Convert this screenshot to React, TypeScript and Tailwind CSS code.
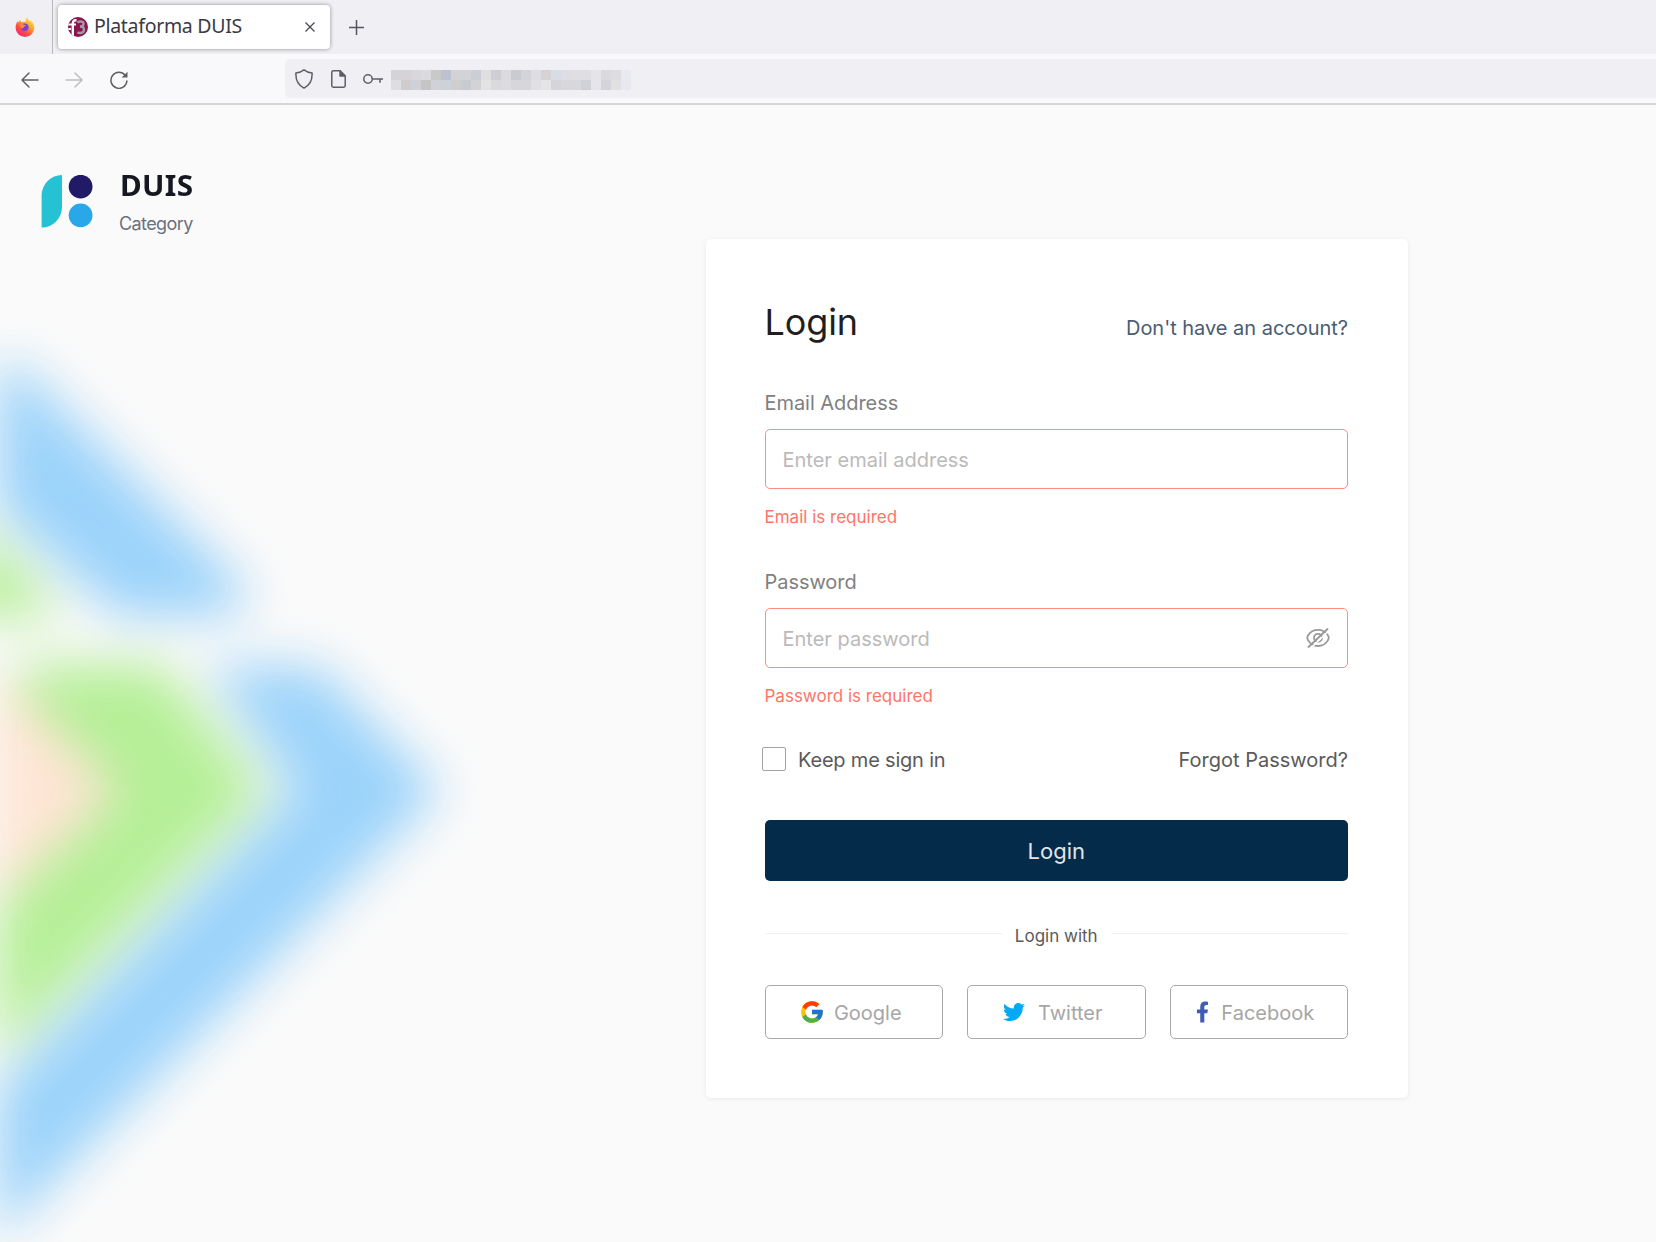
import React from "react";
import { FcGoogle } from "react-icons/fc";
import { FaTwitter, FaFacebookF } from "react-icons/fa";

const MOSAIC = [
  ["#d3d3d8", "#d5d3d6", "#d8d8dc", "#dbdbdd", "#c9c9ca", "#bec1cf", "#d3d3d7", "#d3d3d7", "#cdcdd5", "#dfdfe2", "#cfcfd3", "#dadadf", "#cacbd0", "#d3d3d8", "#dddde3", "#d6d3d5", "#d8dce6", "#dddde3", "#dfdfe3", "#dedee3", "#e4e4e9", "#dadade", "#dddddf", "#e9e9f0"],
  ["#dedee2", "#cfcccf", "#d0d1d7", "#c5c5c6", "#d1d2d7", "#cdd1d8", "#cecece", "#cacbd0", "#d3d3d7", "#e3e3e6", "#dadadc", "#dbdbe0", "#d6d6db", "#d6d6db", "#dfdfe4", "#e5e5e7", "#d4d4da", "#d8d7db", "#d8d7db", "#d0d0d7", "#e5e5eb", "#d4d4da", "#e1e1e3", "#e8e8ee"],
];

function FirefoxIcon() {
  return (
    <svg className="size-5" viewBox="0 0 20 20">
      <defs>
        <linearGradient id="fx" x1="0.85" y1="0.1" x2="0.25" y2="0.95">
          <stop offset="0" stopColor="#ffe54a" />
          <stop offset="0.4" stopColor="#ff9a2e" />
          <stop offset="0.7" stopColor="#ff4a45" />
          <stop offset="1" stopColor="#f02c6e" />
        </linearGradient>
      </defs>
      <path
        d="M2.6 4.2 3.8 5.6 5 2.8 6.2 5.2C8 4.6 9.3 4.7 10.4 5.2 10.2 3.2 11.2 1.6 12.6.6c.2 1.8 1.2 2.6 2.4 3.9l.5-1.3c2.2 1.8 3.9 4.400 3.900 7.500a9.400 9.200 0 0 1-18.800 0C.6 8.200 1.200 6 2.600 4.200Z"
        fill="url(#fx)"
      />
      <circle cx="9.800" cy="10.300" r="3.800" fill="#7a3fd6" />
      <path d="M4.800 7.300c1.500-.8 3-.5 4 .5l2.300.2c-.2 1-1.400 1.200-2 1.500-.2 1.800-1.800 2.200-3.200 1.600Z" fill="#ff8a36" />
    </svg>
  );
}

function SiteIcon() {
  return (
    <span className="relative flex size-5 items-center justify-center overflow-hidden rounded-full bg-[#8c1450]">
      <svg className="size-5" viewBox="0 0 20 20" fill="none" strokeWidth="2.400">
        <path d="M0 7.500h8M0 12h3" stroke="#fff" strokeWidth="2" />
        <path d="M8.500 3.200C5.500 3 4.800 4.500 4.800 7v13" stroke="#fff" />
        <path d="M9.500 5.500c2-1.500 6-1.500 6 1.300 0 2-2 2.700-3.500 2.700 2 0 4 .8 4 3.200 0 3.300-4.200 4-6.500 2.500" stroke="#a59aa2" />
      </svg>
    </span>
  );
}

function TabBar() {
  return (
    <div className="flex h-[54px] bg-[#f0eff4]">
      <div className="flex w-[53px] items-center justify-center border-r border-[#b9b9be] pr-[3px]">
        <FirefoxIcon />
      </div>
      <div className="mt-[5px] ml-[5px] flex h-11 w-[272px] items-center rounded-[4px] bg-white pr-[15px] pl-[10px] shadow-[0_0_4px_rgba(0,0,0,0.4)]">
        <SiteIcon />
        <span className="mb-[2px] ml-[6px] flex-1 font-['Noto_Sans'] text-[19.5px] leading-6 tracking-[-0.3px] whitespace-nowrap text-[#3a3944]">
          Plataforma DUIS
        </span>
        <svg className="size-[10px]" viewBox="0 0 10 10" stroke="#4a4a52" strokeWidth="1.300">
          <path d="M.5.5l9 9M9.500.5l-9 9" />
        </svg>
      </div>
      <svg className="mt-5 ml-[19px] size-[15px]" viewBox="0 0 15 15" stroke="#55555c" strokeWidth="1.500">
        <path d="M7.500 0v15M0 7.500h15" />
      </svg>
    </div>
  );
}

function Toolbar() {
  return (
    <div className="flex h-[51px] items-start border-b-2 border-[#d6d6d8] bg-[#f9f9fb]">
      <div className="mt-[17px] flex w-[285px] items-center pl-[20.5px]">
        <svg className="h-[18px] w-[18px]" viewBox="0 0 18 18" fill="none" stroke="#5f5f66" strokeWidth="1.500" strokeLinecap="round" strokeLinejoin="round">
          <path d="M17 9H1M8 2 1 9l7 7" />
        </svg>
        <svg className="ml-[26.5px] h-[18px] w-[18px]" viewBox="0 0 18 18" fill="none" stroke="#bdbdc1" strokeWidth="1.500" strokeLinecap="round" strokeLinejoin="round">
          <path d="M1 9h16M10 2l7 7-7 7" />
        </svg>
        <svg className="ml-[26.500px] h-[18px] w-[18px]" viewBox="0 0 18 18" fill="none" stroke="#5f5f66" strokeWidth="1.500" strokeLinecap="round">
          <path d="M15.300 4.500A8 8 0 1 0 16.900 10" />
          <path d="M17.500 .8v5.800h-5.800Z" fill="#5f5f66" stroke="none" />
        </svg>
      </div>
      <div className="mt-[5px] flex h-[39px] flex-1 items-center rounded-l-[5px] bg-[#f0eff4] pl-[10px]">
        <svg className="h-5 w-[18px]" viewBox="0 0 18 20" fill="none" stroke="#5f5f66" strokeWidth="1.500" strokeLinejoin="round">
          <path d="M9 .8C11 2.400 14 3.500 17.100 4c.3 6-2 12-8.100 15.200C2.900 16 .6 10 .9 4 4 3.500 7 2.400 9 .8Z" />
        </svg>
        <svg className="ml-[18px] h-[18px] w-[15px]" viewBox="0 0 15 18" fill="none" stroke="#5f5f66" strokeWidth="1.500" strokeLinejoin="round">
          <path d="M9 .8H2.200Q.8.8.8 2.200v13.600q0 1.400 1.400 1.400h10.600q1.400 0 1.400-1.400V6Z" />
          <path d="M9 .8V6h5.200Z" fill="#5f5f66" />
        </svg>
        <svg className="ml-[17px] h-3 w-5" viewBox="0 0 20 12" fill="none" stroke="#5f5f66" strokeWidth="1.500">
          <circle cx="5" cy="6" r="4.200" />
          <path d="M9.200 6H20M17 6v3.700" />
        </svg>
        <div className="mt-[2px] ml-[8px] grid grid-cols-[repeat(24,10px)] grid-rows-[10px_10px]">
          {MOSAIC.flat().map((color, i) => (
            <span key={i} style={{ backgroundColor: color }} />
          ))}
        </div>
      </div>
    </div>
  );
}

function Backdrop() {
  return (
    <svg className="absolute top-0 left-0 h-[1137px] w-[560px]" viewBox="0 105 560 1137">
      <defs>
        <filter id="soft" filterUnits="userSpaceOnUse" x="-100" y="200" width="760" height="1200" colorInterpolationFilters="sRGB">
          <feGaussianBlur stdDeviation="25" />
        </filter>
      </defs>
      <g filter="url(#soft)">
        <path d="M-4 364 18 364 245 588 238 616H118L-4 508Z" fill="#9cd3fa" />
        <path d="M-30 520 62 616H-30Z" fill="#b0ee8e" />
        <path d="M208 666H318L440 791-4 1240V1088L294 791Z" fill="#9cd3fa" />
        <path d="M40 664H160L264 791-4 1058V908L118 791 5 680Z" fill="#b5ef97" />
        <path d="M-6 700 5 675 118 791-6 908Z" fill="#ffe5d5" />
      </g>
    </svg>
  );
}

function Brand() {
  return (
    <div className="relative flex items-start pt-[70px] pl-[41px]">
      <svg className="h-[53px] w-[52px]" viewBox="0 0 52 53">
        <path d="M21 0V32A20 20.500 0 0 1 1 52.500H.6V20.500A20.400 20.500 0 0 1 21 0Z" fill="#25c2d3" />
        <circle cx="39.600" cy="11.700" r="11.900" fill="#211a66" />
        <circle cx="39.600" cy="40.300" r="11.900" fill="#29a7e9" />
      </svg>
      <div className="ml-[26px] flex flex-col">
        <span className="origin-left scale-x-[1.06] pl-px font-['Noto_Sans'] text-[28px] leading-[20px] font-bold tracking-[0.3px] text-[#15181f]">DUIS</span>
        <span className="mt-[16.5px] font-['Inter'] text-[18px] leading-6 tracking-[-0.6px] text-[#6b7080]">Category</span>
      </div>
    </div>
  );
}

function EyeSlash() {
  return (
    <svg className="h-5 w-6" viewBox="0 0 24 20" fill="none" stroke="#999" strokeWidth="1.800" strokeLinecap="round">
      <path d="M12 1.800c4.200 0 7.800 2.100 9.900 5.400q1.600 2.600 0 5.200c-2.100 3.500-5.700 5.600-9.900 5.600s-7.800-2.100-9.900-5.600q-1.600-2.600 0-5.200C4.200 3.900 7.800 1.800 12 1.800Z" />
      <circle cx="12" cy="9.800" r="4" />
      <path d="M4.300 20.500 23.200 2.500" stroke="#fff" strokeWidth="1.600" />
      <path d="M2.500 19 21.500 1" />
    </svg>
  );
}

function Field({ label, placeholder, error, type, icon }: { label: string; placeholder: string; error: string; type: string; icon?: React.ReactNode }) {
  return (
    <div className="flex flex-col">
      <label className="text-[20px] leading-[30px] tracking-[-0.05px] text-[#808080]">{label}</label>
      <div className="mt-[11px] flex h-[60px] items-center rounded-[5px] border-[1.5px] border-[#ff8a80] pr-[17px] pl-[17px]">
        <input
          type={type}
          placeholder={placeholder}
          className="min-w-0 flex-1 pt-0.5 text-[20px] outline-none placeholder:text-[#bababa]"
        />
        {icon}
      </div>
      <span className="mt-4 text-[17px] leading-6 text-[#ff7468]">{error}</span>
    </div>
  );
}

function SocialButton({ icon, label }: { icon: React.ReactNode; label: string }) {
  return (
    <button className="flex h-[54px] items-center justify-center rounded-[5px] border-[1.5px] border-[#a8a8a8] pr-[7px] text-[20px] text-[#a6a6a6]">
      {icon}
      <span className="pt-[2px]">{label}</span>
    </button>
  );
}

function LoginCard() {
  return (
    <div className="relative mt-[134px] ml-[705.5px] flex h-[859px] w-[702px] flex-col rounded-[5px] bg-white pt-[61px] pr-[59.500px] pl-[59px] font-['Inter'] shadow-[0_1px_5px_rgba(0,0,0,0.07)]">
      <div className="flex h-11 justify-between">
        <h1 className="text-[36px] leading-[44px] tracking-[-0.1px] text-[#1f1f1f]">Login</h1>
        <a className="pt-3 text-[20px] leading-8 tracking-[-0.02px] text-[#4a5c72]">Don't have an account?</a>
      </div>
      <div className="mt-[44px]">
        <Field label="Email Address" placeholder="Enter email address" error="Email is required" type="email" />
      </div>
      <div className="mt-[38px]">
        <Field label="Password" placeholder="Enter password" error="Password is required" type="password" icon={<EyeSlash />} />
      </div>
      <div className="mt-[36px] flex h-[30px] items-center justify-between text-[20px] text-[#5a5a5a]">
        <label className="-ml-[2.5px] flex items-center">
          <span className="mr-[12px] size-6 rounded-[2px] border-[1.5px] border-[#a3a3a3]" />
          <span className="pt-px tracking-[-0.2px]">Keep me sign in</span>
        </label>
        <a className="pt-px">Forgot Password?</a>
      </div>
      <button className="mt-[46px] h-[61px] shrink-0 rounded-[5px] bg-[#042b4a] pt-0.5 text-[22px] text-[#e2e5e9]">Login</button>
      <div className="mt-[43px] flex h-6 items-center">
        <span className="mb-[5px] h-[1.5px] flex-1 bg-[#f1f1f1]" />
        <span className="px-[13px] pt-px text-[17px] text-[#5a5a5a]">Login with</span>
        <span className="mb-[5px] h-[1.5px] flex-1 bg-[#f1f1f1]" />
      </div>
      <div className="mt-[37px] grid grid-cols-3 gap-6">
        <SocialButton icon={<FcGoogle className="mr-[9px] size-[26px]" />} label="Google" />
        <SocialButton icon={<FaTwitter className="mr-[13px] size-[22px] text-[#03a9f4]" />} label="Twitter" />
        <SocialButton icon={<FaFacebookF className="mr-[12px] h-[22px] w-[13px] text-[#3f5db5]" />} label="Facebook" />
      </div>
    </div>
  );
}

export default function App() {
  return (
    <div className="flex h-[1242px] w-[1656px] flex-col overflow-hidden bg-[#fafafa]">
      <TabBar />
      <Toolbar />
      <main className="relative flex-1">
        <Backdrop />
        <div className="h-0">
          <Brand />
        </div>
        <LoginCard />
      </main>
    </div>
  );
}
